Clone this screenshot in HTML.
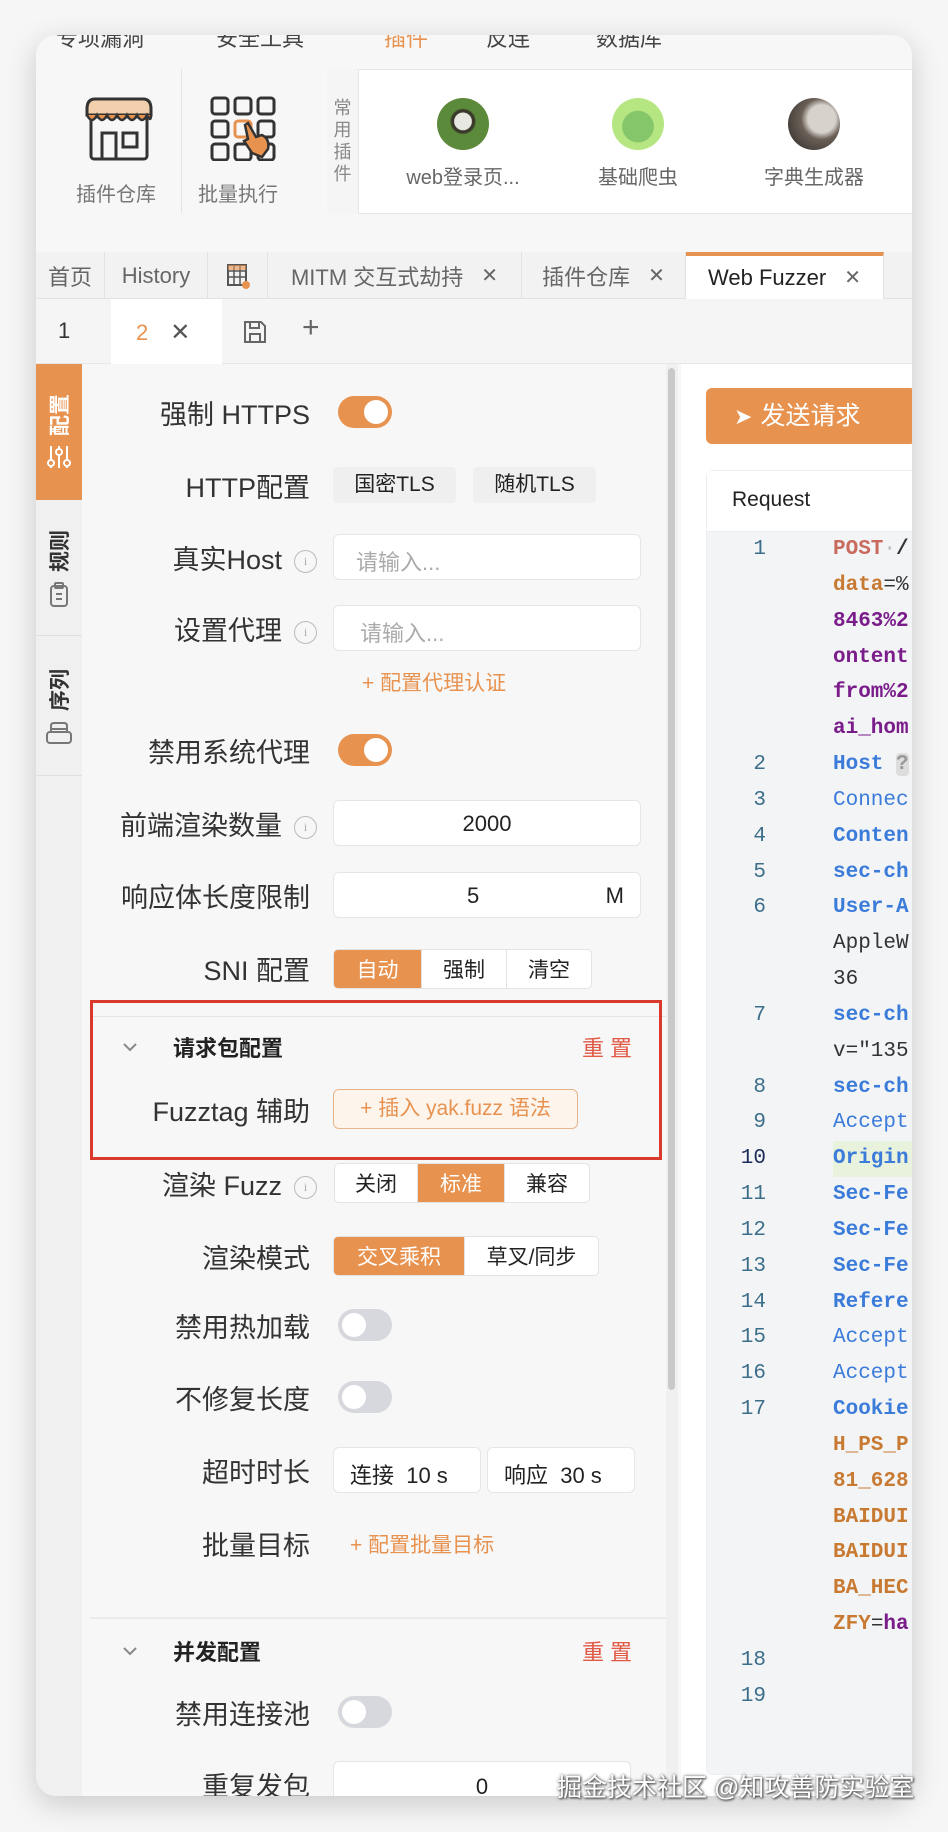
<!DOCTYPE html>
<html><head><meta charset="utf-8">
<style>
*{margin:0;padding:0;box-sizing:border-box}
body{width:948px;height:1832px;background:#f6f6f6;position:relative;overflow:hidden;font-family:"Liberation Sans","Noto Sans CJK SC",sans-serif;color:#222}
.a{position:absolute}
#card{position:absolute;left:36px;top:35px;width:876px;height:1761px;background:#f7f7f7;border-radius:20px;overflow:hidden;box-shadow:0 8px 30px rgba(0,0,0,.18)}
.lbl{position:absolute;font-size:27px;color:#333;white-space:nowrap;text-align:right}
.row{position:absolute;left:0;width:595px;height:40px}
.row .lbl{right:367px;top:1px}
.tg{position:absolute;width:54px;height:32px;border-radius:16px;background:#e8924f}
.tg::after{content:"";position:absolute;top:4px;right:4px;width:24px;height:24px;border-radius:50%;background:#fff}
.tg.off{background:#d6d8dd}
.tg.off::after{right:auto;left:4px}
.inp{position:absolute;background:#fff;border:1px solid #e6e6e6;border-radius:6px;height:46px;font-size:22px;color:#aaa;padding:10px 22px}
.seg{position:absolute;display:flex;height:40px;border:1px solid #e3e3e3;border-radius:5px;overflow:hidden;background:#fff;font-size:21px}
.seg span{display:flex;align-items:center;justify-content:center;border-left:1px solid #e3e3e3;color:#222}
.seg span:first-child{border-left:none}
.seg .on{background:#e8924f;color:#fff}
.info{display:inline-block;width:23px;height:23px;border:1.5px solid #bbb;border-radius:50%;font-size:12px;color:#aaa;text-align:center;line-height:20px;vertical-align:middle;margin-left:12px;font-family:"Liberation Serif",serif}
.code{position:absolute;left:0;font-family:"Liberation Mono",monospace;font-size:21px;white-space:nowrap;height:36px;line-height:36px}
.ln{position:absolute;width:60px;text-align:right;color:#3c6e8a;left:0}
.tx{position:absolute;left:127px}
.b{font-weight:bold}
.pu{color:#7a1d8a;font-weight:bold}
.bl{color:#3b7bd9}
.or{color:#c97a32;font-weight:bold}
.tab{position:absolute;top:0;height:47px;font-size:22px;color:#666;display:flex;align-items:center;justify-content:center;border-right:1px solid #e2e2e2}
.x{margin-left:18px;color:#666;font-size:20px}
.vt{position:absolute;left:0;width:46px;display:flex;flex-direction:column;align-items:center;justify-content:center;font-size:21px;font-weight:bold}
.vt .t{writing-mode:vertical-rl;text-orientation:sideways;transform:rotate(180deg)}
.chev{position:absolute;left:40px;width:16px;height:16px}
</style></head><body>
<div id="card">
  <div class="a" style="left:20px;top:-14px;font-size:22px;color:#444;white-space:nowrap">
    <span class="a" style="left:0">专项漏洞</span><span class="a" style="left:160px">安全工具</span><span class="a" style="left:328px;color:#e8924f">插件</span><span class="a" style="left:430px">反连</span><span class="a" style="left:540px">数据库</span>
  </div>
  <div class="a" style="left:145px;top:34px;width:1px;height:144px;background:#e4e4e4"></div>
  <svg class="a" style="left:45px;top:60px" width="76" height="66" viewBox="0 0 76 66">
    <rect x="10" y="22" width="56" height="42" rx="3" fill="none" stroke="#333" stroke-width="3"/>
    <path d="M6 14 Q6 4 14 4 H62 Q70 4 70 14 V20 H6 Z" fill="#f3cfae" stroke="#333" stroke-width="3"/>
    <path d="M6 20 Q11 30 16 20 Q21 30 26 20 Q31 30 36 20 Q41 30 46 20 Q51 30 56 20 Q61 30 66 20 Q70 28 70 20" fill="#e8924f" stroke="#333" stroke-width="2.5"/>
    <rect x="21" y="38" width="14" height="26" fill="none" stroke="#333" stroke-width="3"/>
    <rect x="42" y="38" width="14" height="14" fill="none" stroke="#333" stroke-width="3"/>
  </svg>
  <div class="a" style="left:40px;top:143px;font-size:20px;color:#777">插件仓库</div>
  <svg class="a" style="left:172px;top:60px" width="70" height="66" viewBox="0 0 70 66">
    <g fill="none" stroke="#333" stroke-width="3">
      <rect x="4" y="3" width="16" height="16" rx="3"/><rect x="27" y="3" width="16" height="16" rx="3"/><rect x="50" y="3" width="16" height="16" rx="3"/>
      <rect x="4" y="26" width="16" height="16" rx="3"/><rect x="27" y="26" width="16" height="16" rx="3" stroke="#e8924f"/><rect x="50" y="26" width="16" height="16" rx="3"/>
      <rect x="4" y="49" width="16" height="16" rx="3"/><rect x="27" y="49" width="16" height="16" rx="3"/><rect x="50" y="49" width="16" height="16" rx="3"/>
    </g>
    <path d="M37 30 L40 28 L48 42 L54 40 Q62 44 60 54 L54 62 L44 58 L36 46 L40 44 Z" fill="#e8924f" stroke="#333" stroke-width="2.5"/>
  </svg>
  <div class="a" style="left:162px;top:143px;font-size:20px;color:#777">批量执行</div>
  <div class="a" style="left:291px;top:34px;width:600px;height:145px;background:#fff;border:1px solid #e6e6e6;border-radius:6px"></div>
  <div class="a" style="left:291px;top:34px;width:32px;height:145px;background:#f5f5f5;border-right:1px solid #e6e6e6;font-size:18px;color:#888;line-height:22px;text-align:center;padding-top:28px">常<br>用<br>插<br>件</div>
  <div class="a" style="left:401px;top:63px;width:52px;height:52px;border-radius:50%;background:radial-gradient(circle at 50% 45%,#e8e8e2 0 22%,#3a3a2a 24% 30%,#5a8a3a 34%)"></div>
  <div class="a" style="left:363px;top:126px;width:128px;text-align:center;font-size:20px;color:#666">web登录页...</div>
  <div class="a" style="left:576px;top:63px;width:52px;height:52px;border-radius:50%;background:radial-gradient(circle at 50% 55%,#86c66a 0 40%,#b6e682 42%)"></div>
  <div class="a" style="left:538px;top:126px;width:128px;text-align:center;font-size:20px;color:#666">基础爬虫</div>
  <div class="a" style="left:752px;top:63px;width:52px;height:52px;border-radius:50%;background:radial-gradient(circle at 65% 40%,#d8d2cc 0 30%,#6a6058 45%,#2a2522)"></div>
  <div class="a" style="left:714px;top:126px;width:128px;text-align:center;font-size:20px;color:#666">字典生成器</div>
  <div class="a" style="left:0;top:217px;width:876px;height:47px;background:#f2f2f2;border-bottom:1px solid #e2e2e2">
    <div class="tab" style="left:0;width:69px">首页</div>
    <div class="tab" style="left:69px;width:103px">History</div>
    <div class="tab" style="left:172px;width:60px"><svg width="26" height="28" viewBox="0 0 26 28"><rect x="3" y="3" width="18" height="20" fill="none" stroke="#555" stroke-width="2"/><path d="M3 9H21M3 15H21M9 3V23M15 3V23" stroke="#555" stroke-width="1.5"/><rect x="3" y="3" width="18" height="5" fill="#e8924f" opacity=".6"/><circle cx="21" cy="23" r="4" fill="#e8924f"/></svg></div>
    <div class="tab" style="left:232px;width:254px">MITM 交互式劫持<span class="x">✕</span></div>
    <div class="tab" style="left:486px;width:164px">插件仓库<span class="x">✕</span></div>
    <div class="tab" style="left:650px;width:198px;background:#fff;color:#222;border-top:4px solid #e8924f">Web Fuzzer<span class="x">✕</span></div>
  </div>
  <div class="a" style="left:0;top:264px;width:876px;height:65px;background:#f5f5f5;border-bottom:1px solid #e6e6e6">
    <div class="a" style="left:22px;top:19px;font-size:22px;color:#333">1</div>
    <div class="a" style="left:75px;top:0;width:111px;height:65px;background:#fff;font-size:22px;color:#e8924f;padding:19px 0 0 25px">2<span style="margin-left:22px;color:#555;font-size:24px">✕</span></div>
    <svg class="a" style="left:206px;top:20px" width="26" height="26" viewBox="0 0 26 26"><path d="M3 3H19L23 7V23H3Z M8 3V9H17V3 M8 23V15H18V23" fill="none" stroke="#666" stroke-width="2"/></svg>
    <div class="a" style="left:266px;top:12px;font-size:30px;color:#666;font-weight:300">+</div>
  </div>
  <div class="a" style="left:0;top:329px;width:46px;height:1432px;background:#f0f0f0"></div>
  <div class="vt" style="top:329px;height:136px;background:#e8924f;color:#fff"><span class="t">配置</span>
    <svg style="margin-top:8px" width="24" height="26" viewBox="0 0 24 26"><g stroke="#fff" stroke-width="2" fill="none"><path d="M4 2V24M12 2V24M20 2V24"/><circle cx="4" cy="19" r="3" fill="#e8924f"/><circle cx="12" cy="8" r="3" fill="#e8924f"/><circle cx="20" cy="19" r="3" fill="#e8924f"/></g></svg></div>
  <div class="vt" style="top:468px;height:133px;color:#333;border-bottom:1px solid #e0e0e0"><span class="t">规则</span>
    <svg style="margin-top:10px" width="20" height="26" viewBox="0 0 20 26"><g stroke="#777" stroke-width="2" fill="none"><rect x="2" y="4" width="16" height="20" rx="3"/><rect x="6" y="1" width="8" height="5" rx="1"/><path d="M7 12h6M7 17h6"/></g></svg></div>
  <div class="vt" style="top:603px;height:138px;color:#333;border-bottom:1px solid #e0e0e0"><span class="t">序列</span>
    <svg style="margin-top:10px" width="28" height="24" viewBox="0 0 28 24"><g stroke="#777" stroke-width="2" fill="none"><rect x="2" y="11" width="24" height="11" rx="3"/><path d="M6 11V5Q6 2 9 2H19Q22 2 22 5V11M6 8H22"/></g></svg></div>
  <div class="a" style="left:46px;top:329px;width:595px;height:1432px;background:#f7f7f7">
    <div class="a" style="left:584px;top:0;width:12px;height:1432px;background:#f0f0f0"></div>
    <div class="a" style="left:586px;top:4px;width:7px;height:1022px;border-radius:4px;background:#c9c9c9"></div>
    <div class="row" style="top:28px"><div class="lbl">强制 HTTPS</div><div class="tg" style="left:256px;top:4px"></div></div>
    <div class="row" style="top:101px"><div class="lbl">HTTP配置</div>
      <div class="a" style="left:251px;top:2px;width:123px;height:36px;background:#efefef;border-radius:4px;font-size:21px;text-align:center;line-height:36px">国密TLS</div>
      <div class="a" style="left:391px;top:2px;width:123px;height:36px;background:#efefef;border-radius:4px;font-size:21px;text-align:center;line-height:36px">随机TLS</div></div>
    <div class="row" style="top:173px"><div class="lbl" style="right:360px">真实Host<span class="info">i</span></div><div class="inp" style="left:251px;top:-3px;width:308px">请输入...</div></div>
    <div class="row" style="top:244px"><div class="lbl" style="right:360px">设置代理<span class="info">i</span></div><div class="inp" style="left:251px;top:-3px;width:308px;padding-left:26px">请输入...</div></div>
    <div class="a" style="left:280px;top:303px;font-size:21px;color:#e8924f">+ 配置代理认证</div>
    <div class="row" style="top:366px"><div class="lbl">禁用系统代理</div><div class="tg" style="left:256px;top:4px"></div></div>
    <div class="row" style="top:439px"><div class="lbl" style="right:360px">前端渲染数量<span class="info">i</span></div><div class="inp" style="left:251px;top:-3px;width:308px;color:#222;text-align:center">2000</div></div>
    <div class="row" style="top:511px"><div class="lbl">响应体长度限制</div><div class="inp" style="left:251px;top:-3px;width:308px;color:#222"><span style="position:absolute;left:133px">5</span><span style="position:absolute;right:16px">M</span></div></div>
    <div class="row" style="top:584px"><div class="lbl">SNI 配置</div><div class="seg" style="left:251px;top:1px"><span class="on" style="width:87px">自动</span><span style="width:85px">强制</span><span style="width:85px">清空</span></div></div>
    <div class="a" style="left:8px;top:652px;width:576px;height:1px;background:#e4e4e4"></div>
    <svg class="chev" style="top:675px" viewBox="0 0 16 16"><path d="M2 5L8 11L14 5" fill="none" stroke="#888" stroke-width="2"/></svg>
    <div class="a" style="left:91px;top:667px;font-size:22px;font-weight:bold">请求包配置</div>
    <div class="a" style="left:500px;top:667px;font-size:22px;color:#e05a45;letter-spacing:6px">重置</div>
    <div class="row" style="top:725px"><div class="lbl">Fuzztag 辅助</div><div class="a" style="left:251px;top:0px;width:245px;height:40px;border:1.5px solid #e8b48a;border-radius:6px;background:#fdf4ec;color:#e8924f;font-size:21px;text-align:center;line-height:37px">+ 插入 yak.fuzz 语法</div></div>
    <div class="row" style="top:799px"><div class="lbl" style="right:360px">渲染 Fuzz<span class="info">i</span></div><div class="seg" style="left:252px;top:0"><span style="width:82px">关闭</span><span class="on" style="width:87px">标准</span><span style="width:85px">兼容</span></div></div>
    <div class="row" style="top:872px"><div class="lbl">渲染模式</div><div class="seg" style="left:251px;top:0"><span class="on" style="width:130px">交叉乘积</span><span style="width:134px">草叉/同步</span></div></div>
    <div class="row" style="top:941px"><div class="lbl">禁用热加载</div><div class="tg off" style="left:256px;top:4px"></div></div>
    <div class="row" style="top:1013px"><div class="lbl">不修复长度</div><div class="tg off" style="left:256px;top:4px"></div></div>
    <div class="row" style="top:1086px"><div class="lbl">超时时长</div>
      <div class="inp" style="left:251px;top:-3px;width:148px;color:#222;padding:10px 16px">连接&nbsp;&nbsp;10 s</div>
      <div class="inp" style="left:405px;top:-3px;width:148px;color:#222;padding:10px 16px">响应&nbsp;&nbsp;30 s</div></div>
    <div class="row" style="top:1159px"><div class="lbl">批量目标</div><div class="a" style="left:268px;top:6px;font-size:21px;color:#e8924f">+ 配置批量目标</div></div>
    <div class="a" style="left:8px;top:1253px;width:576px;height:2px;background:#ebebeb"></div>
    <svg class="chev" style="top:1279px" viewBox="0 0 16 16"><path d="M2 5L8 11L14 5" fill="none" stroke="#888" stroke-width="2"/></svg>
    <div class="a" style="left:91px;top:1271px;font-size:22px;font-weight:bold">并发配置</div>
    <div class="a" style="left:500px;top:1271px;font-size:22px;color:#e05a45;letter-spacing:6px">重置</div>
    <div class="row" style="top:1328px"><div class="lbl">禁用连接池</div><div class="tg off" style="left:256px;top:4px"></div></div>
    <div class="row" style="top:1400px"><div class="lbl">重复发包</div><div class="inp" style="left:251px;top:-3px;width:298px;color:#222;text-align:center;padding-top:12px">0</div></div>
  </div>
  <div class="a" style="left:54px;top:965px;width:572px;height:160px;border:3.5px solid #d93a2b"></div>
  <div class="a" style="left:645px;top:329px;width:231px;height:1432px;background:#fff">
    <div class="a" style="left:25px;top:24px;width:210px;height:56px;background:#e8924f;border-radius:6px;color:#fff;font-size:25px;line-height:56px;padding-left:28px;white-space:nowrap"><span style="font-size:22px;margin-right:8px">➤</span>发送请求</div>
    <div class="a" style="left:25px;top:106px;width:210px;height:1305px;background:#f3f4f6;border:1px solid #eceef1;border-radius:6px"></div>
    <div class="a" style="left:26px;top:107px;width:210px;height:61px;background:#fff;border-bottom:1px solid #eceef1;font-size:21px;padding:17px 0 0 25px">Request</div>
    <div class="a" style="left:25px;top:168px;width:210px;height:1200px">
      <div class="code" style="top:0"><span class="ln">1</span><span class="tx b" style="color:#c96a5f">POST<span style="color:#bbb;font-weight:normal">·</span><span style="color:#333">/</span></span></div>
      <div class="code" style="top:36px"><span class="tx or">data<span style="color:#333;font-weight:normal">=%</span></span></div>
      <div class="code" style="top:72px"><span class="tx pu">8463%2</span></div>
      <div class="code" style="top:108px"><span class="tx pu">ontent</span></div>
      <div class="code" style="top:143px"><span class="tx pu">from%2</span></div>
      <div class="code" style="top:179px"><span class="tx pu">ai_hom</span></div>
      <div class="code" style="top:215px"><span class="ln">2</span><span class="tx bl b">Host <span style="background:#ddd;color:#999;border-radius:4px">?</span></span></div>
      <div class="code" style="top:251px"><span class="ln">3</span><span class="tx bl">Connec</span></div>
      <div class="code" style="top:287px"><span class="ln">4</span><span class="tx bl b">Conten</span></div>
      <div class="code" style="top:323px"><span class="ln">5</span><span class="tx bl b">sec-ch</span></div>
      <div class="code" style="top:358px"><span class="ln">6</span><span class="tx bl b">User-A</span></div>
      <div class="code" style="top:394px"><span class="tx" style="color:#333">AppleW</span></div>
      <div class="code" style="top:430px"><span class="tx" style="color:#333">36</span></div>
      <div class="code" style="top:466px"><span class="ln">7</span><span class="tx bl b">sec-ch</span></div>
      <div class="code" style="top:502px"><span class="tx" style="color:#333">v="135</span></div>
      <div class="code" style="top:538px"><span class="ln">8</span><span class="tx bl b">sec-ch</span></div>
      <div class="code" style="top:573px"><span class="ln">9</span><span class="tx bl">Accept</span></div>
      <div class="code" style="top:609px"><span class="ln" style="color:#1c2c5a">10</span><span class="tx bl b" style="background:#e9f2dc;padding-right:20px">Origin</span></div>
      <div class="code" style="top:645px"><span class="ln">11</span><span class="tx bl b">Sec-Fe</span></div>
      <div class="code" style="top:681px"><span class="ln">12</span><span class="tx bl b">Sec-Fe</span></div>
      <div class="code" style="top:717px"><span class="ln">13</span><span class="tx bl b">Sec-Fe</span></div>
      <div class="code" style="top:753px"><span class="ln">14</span><span class="tx bl b">Refere</span></div>
      <div class="code" style="top:788px"><span class="ln">15</span><span class="tx bl">Accept</span></div>
      <div class="code" style="top:824px"><span class="ln">16</span><span class="tx bl">Accept</span></div>
      <div class="code" style="top:860px"><span class="ln">17</span><span class="tx bl b">Cookie</span></div>
      <div class="code" style="top:896px"><span class="tx or">H_PS_P</span></div>
      <div class="code" style="top:932px"><span class="tx or">81_628</span></div>
      <div class="code" style="top:968px"><span class="tx or">BAIDUI</span></div>
      <div class="code" style="top:1003px"><span class="tx or">BAIDUI</span></div>
      <div class="code" style="top:1039px"><span class="tx or">BA_HEC</span></div>
      <div class="code" style="top:1075px"><span class="tx or">ZFY<span style="color:#333;font-weight:normal">=</span><span class="pu">ha</span></span></div>
      <div class="code" style="top:1111px"><span class="ln">18</span></div>
      <div class="code" style="top:1147px"><span class="ln">19</span></div>
    </div>
  </div>
</div>
<div class="a" style="left:557px;top:1768px;font-size:25px;color:#fff;white-space:nowrap;text-shadow:0 0 3px #555,1px 1px 2px #333">掘金技术社区 @知攻善防实验室</div>
</body></html>
